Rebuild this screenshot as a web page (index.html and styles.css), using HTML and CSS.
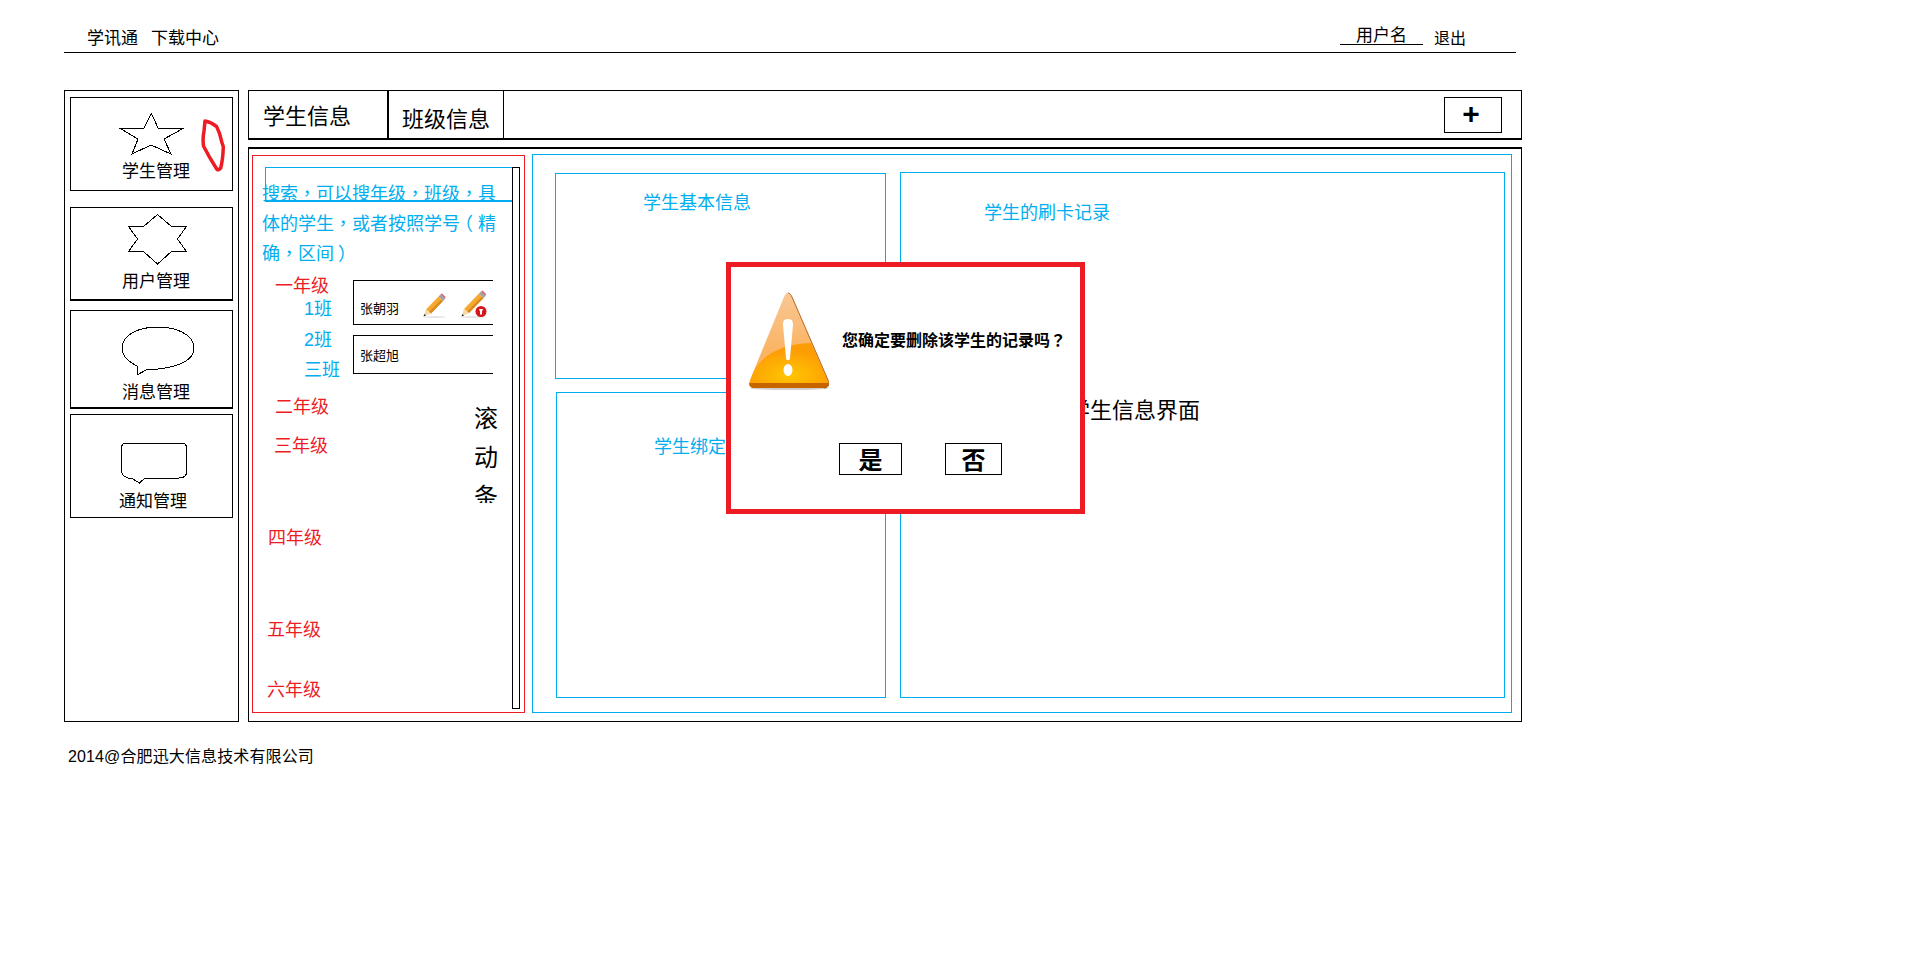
FILE: index.html
```html
<!DOCTYPE html>
<html lang="zh-CN">

<head>
  <meta charset="UTF-8" />
  <meta name="viewport" content="width=device-width, initial-scale=1.0" />
  <title>学讯通</title>
  <link rel="stylesheet" href="styles.css">
</head>

<body>
  <header class="top">
    <nav class="top-nav">
      <a>学讯通</a>
      <a>下载中心</a>
    </nav>
    <div class="top-user">
      <span class="user-name">用户名</span>
      <a>退出</a>
    </div>
  </header>

  <div class="layout">
    <aside class="sidebar">
      <div class="card card-student">
        <svg class="shape" width="66" height="43" viewBox="0 0 66 43">
          <polygon points="32.5,0.5 39,15 65,15 45,26 52,41 32,32 13,41 19,26 0.5,15 25,15" />
        </svg>
        <span class="card-label">学生管理</span>
        <svg class="scribble" width="26" height="54" viewBox="0 0 26 54">
          <path d="M4 2 Q10 3 15.7 7.7 Q19 14 20.7 22.7 L22.3 27.7 Q22 40 19.7 49 Q17 52 15.7 50 Q8 38 2.5 27 Q1.5 20 3 12 Z" />
        </svg>
      </div>
      <div class="card card-user">
        <svg class="shape" width="60" height="53" viewBox="0 0 60 53">
          <polygon points="29.5,0.5 43.5,12.5 58.5,12.5 49.5,25 58.5,37.5 43.5,37.5 29.5,50 15.5,37.5 0.5,37.5 9.5,25 0.5,12.5 15.5,12.5" />
        </svg>
        <span class="card-label">用户管理</span>
      </div>
      <div class="card card-message">
        <svg class="shape" width="75" height="51" viewBox="0 0 75 51">
          <path d="M16 40 L16 49 L25 44 C47 43 73 38 73 22 C73 8 54 1 37 1 C19 1 1 8 1 22 C1 30 8 36 16 40 Z" />
        </svg>
        <span class="card-label">消息管理</span>
      </div>
      <div class="card card-notice">
        <svg class="shape" width="67" height="42" viewBox="0 0 67 42">
          <path d="M6 1 H60 Q65.5 1 65.5 6 V30 Q65.5 36 58 36 H24 L18.5 41 L10 36 H7 Q0.5 34 0.5 28 V6 Q0.5 1 6 1 Z" />
        </svg>
        <span class="card-label">通知管理</span>
      </div>
    </aside>

    <div class="content">
      <div class="tabs">
        <div class="tab tab-student">学生信息</div>
        <div class="tab tab-class">班级信息</div>
        <button class="tab-add">+</button>
      </div>

      <main class="main">
        <section class="tree-panel">
          <div class="search-box"></div>
          <div class="fake-scroll"></div>
          <p class="search-text">搜索<span class="punct" lang="zh-TW">，</span>可以搜年级<span class="punct" lang="zh-TW">，</span>班级<span class="punct" lang="zh-TW">，</span>具体的学生<span class="punct" lang="zh-TW">，</span>或者按照学号<span class="paren-open">（</span>精确<span class="punct" lang="zh-TW">，</span>区间<span class="paren-close">）</span></p>
          <div class="tree">
            <ul class="grades">
              <li class="grade g1">一年级</li>
              <li class="klass k1">1班</li>
              <li class="klass k2">2班</li>
              <li class="klass k3">三班</li>
              <li class="grade g2">二年级</li>
              <li class="grade g3">三年级</li>
              <li class="grade g4">四年级</li>
              <li class="grade g5">五年级</li>
              <li class="grade g6">六年级</li>
            </ul>
            <div class="students">
              <div class="student student-first">
                <span class="student-name">张朝羽</span>
                <svg class="pencil" width="23" height="25" viewBox="0 0 23 25">
                  <ellipse class="pencil-shadow" cx="12" cy="24" rx="11" ry="1" />
                  <polygon fill="#f6a92f" points="3,16.5 15.5,3.5 20,8 8,20.5" />
                  <polygon fill="#d98a1f" points="6,19 18.5,6.5 20,8 8,20.5" />
                  <polygon fill="#f8d9a6" points="0.5,23.5 3,16.5 8,20.5" />
                  <polygon fill="#222222" points="0.5,23.5 1.4,21 3,22.4" />
                  <polygon fill="#9aa3a8" points="15.5,3.5 17.5,1.5 22,6 20,8" />
                  <polygon fill="#d8616c" points="17.5,1.5 19,0.5 22.5,4 22,6" />
                </svg>
                <svg class="pencil pencil-del" width="26" height="28" viewBox="0 0 26 28">
                  <ellipse class="pencil-shadow" cx="12" cy="27" rx="12" ry="1" />
                  <polygon fill="#f6a92f" points="3,19 18,3.5 22.5,8 8,23" />
                  <polygon fill="#d98a1f" points="6,21.5 21,6.5 22.5,8 8,23" />
                  <polygon fill="#f8d9a6" points="0.5,26.5 3,19 8,23" />
                  <polygon fill="#222222" points="0.5,26.5 1.4,24 3,25.4" />
                  <polygon fill="#9aa3a8" points="18,3.5 20,1.5 24.5,6 22.5,8" />
                  <polygon fill="#d8616c" points="20,1.5 21.5,0.5 25,4 24.5,6" />
                  <circle fill="#d7141a" cx="20" cy="21.5" r="5.5" />
                  <path d="M18 19 H22 L21 21.5 V24.5 H19 V21.5 Z" fill="#ffffff" />
                </svg>
              </div>
              <div class="student student-second">
                <span class="student-name">张超旭</span>
              </div>
              <div class="scroll-label">滚动条</div>
            </div>
          </div>
        </section>

        <section class="info-panel">
          <div class="info-left">
            <div class="box box-basic"><span class="box-title">学生基本信息</span></div>
            <div class="box box-bind"><span class="box-title">学生绑定的卡</span></div>
          </div>
          <div class="box box-record">
            <div class="box-title">学生的刷卡记录</div>
            <div class="page-title">学生信息界面</div>
          </div>
        </section>
      </main>
    </div>
  </div>

  <footer class="footer">2014@合肥迅大信息技术有限公司</footer>

  <div class="dialog">
    <div class="dialog-body">
      <svg class="warn" width="80" height="98" viewBox="0 0 80 98">
        <defs>
          <linearGradient id="warnTop" x1="0" y1="0" x2="0" y2="1">
            <stop offset="0" stop-color="#f9c797" />
            <stop offset="0.6" stop-color="#fbb463" />
          </linearGradient>
          <radialGradient id="warnLow" cx="0.49" cy="0.72" r="0.55">
            <stop offset="0" stop-color="#ffc600" />
            <stop offset="1" stop-color="#fd9d05" />
          </radialGradient>
          <clipPath id="warnClip">
            <path d="M39 1 C41 1 42 3 43 5 L79 88 C81 93 79 96 75 96 H5 C1 96 -1 93 1 88 L35 5 C36 3 37 1 39 1 Z" />
          </clipPath>
        </defs>
        <ellipse cx="40" cy="96.5" rx="39" ry="1.5" fill="#cfcfcf" />
        <g clip-path="url(#warnClip)">
          <rect width="80" height="98" fill="url(#warnTop)" />
          <path d="M0 96 C2 70 25 52 62 51 L82 96 Z" fill="url(#warnLow)" />
          <rect y="91" width="80" height="6" fill="#c76400" />
        </g>
        <path d="M39 1 C41 1 42 3 43 5 L79 88 C81 93 79 96 75 96" fill="none" stroke="#b9661c" stroke-width="1" />
        <path d="M39 27 C43 27 44 29 44 33 L41 66 C41 69 37 69 37 66 L34 33 C34 29 35 27 39 27 Z" fill="#ffffff" />
        <ellipse cx="39" cy="78" rx="4.5" ry="6" fill="#ffffff" />
      </svg>
      <p class="dialog-text">您确定要删除该学生的记录吗<span class="punct" lang="zh-TW">？</span></p>
    </div>
    <div class="dialog-actions">
      <button class="dialog-btn btn-yes">是</button>
      <button class="dialog-btn btn-no">否</button>
    </div>
  </div>
</body>

</html>
```

FILE: styles.css
```css
* {
  box-sizing: border-box;
}

body {
  margin: 0;
  background-color: #ffffff;
  color: #000000;
  font-family: "Liberation Sans", "Noto Sans CJK SC", sans-serif;
  font-size: 17px;
  line-height: 20px;
}

p,
ul {
  margin: 0;
  padding: 0;
}

ul {
  list-style: none;
}

/* centered full-width punctuation */
.punct {
  font-family: "Noto Sans CJK TC", sans-serif;
  line-height: 1;
}

.paren-open,
.paren-close {
  display: inline-block;
  line-height: 1;
}

.paren-open {
  transform: translateX(-5px);
}

.paren-close {
  transform: translateX(4px);
}

/* top bar */
.top {
  display: flex;
  justify-content: space-between;
  align-items: flex-end;
  width: 1452px;
  height: 53px;
  margin-left: 64px;
  padding: 0 50px 3px 23px;
  border-bottom: 1px solid #000;
}

.top-nav {
  display: flex;
  gap: 13px;
}

.top-user {
  display: flex;
  align-items: flex-end;
  gap: 11px;
  font-size: 16px;
}

.user-name {
  width: 83px;
  height: 21px;
  margin-bottom: 4px;
  border-bottom: 1px solid #000;
  font-size: 17px;
  line-height: 24px;
  text-align: center;
}

/* page body */
.layout {
  display: flex;
  gap: 9px;
  width: 1458px;
  height: 632px;
  margin: 37px 0 0 64px;
}

.sidebar {
  width: 175px;
  padding: 6px 5px;
  border: 1px solid #000;
}

.card {
  position: relative;
  display: flex;
  flex-direction: column;
  align-items: flex-start;
  border: 1px solid #000;
}

.shape {
  display: block;
  fill: none;
  stroke: #000;
  stroke-width: 1;
  shape-rendering: crispEdges;
}

.card-student {
  height: 94px;
  padding-top: 15px;
}

.card-student .shape {
  margin-left: 48px;
}

.card-student .card-label {
  margin: 6px 0 0 51px;
}

.card-user {
  height: 94px;
  margin-top: 16px;
  padding-top: 6px;
  border-bottom-width: 2px;
}

.card-user .shape {
  margin-left: 57px;
}

.card-user .card-label {
  margin: 5px 0 0 51px;
}

.card-message {
  height: 99px;
  margin-top: 9px;
  padding-top: 15px;
  border-bottom-width: 2px;
}

.card-message .shape {
  margin-left: 50px;
}

.card-message .card-label {
  margin: 6px 0 0 51px;
}

.card-notice {
  height: 104px;
  margin-top: 5px;
  padding-top: 27px;
}

.card-notice .shape {
  margin-left: 50px;
}

.card-notice .card-label {
  margin: 8px 0 0 48px;
}

.scribble {
  position: absolute;
  top: 21px;
  left: 130px;
  fill: none;
  stroke: #ed1c24;
  stroke-width: 3.5;
  stroke-linejoin: round;
}

.content {
  display: flex;
  flex-direction: column;
  gap: 7px;
  width: 1274px;
}

.tabs {
  display: flex;
  height: 50px;
  border: 1px solid #000;
  border-bottom-width: 2px;
  font-size: 22px;
}

.tab {
  height: 100%;
}

.tab-student {
  width: 140px;
  padding: 6px 0 0 14px;
  line-height: 40px;
  border-right: 2px solid #000;
}

.tab-class {
  width: 115px;
  padding: 9px 0 0 13px;
  line-height: 40px;
  border-right: 1px solid #000;
}

.tab-add {
  width: 58px;
  height: 36px;
  margin: 6px 19px 0 auto;
  padding: 0 4px 3px 0;
  background: #fff;
  border: 1px solid #000;
  font-family: "Liberation Sans", sans-serif;
  font-size: 30px;
  font-weight: bold;
  line-height: 30px;
}

.main {
  display: flex;
  align-items: flex-start;
  gap: 7px;
  height: 575px;
  padding: 5px 0 0 3px;
  border: 1px solid #000;
  border-top-width: 2px;
}

/* left tree */
.tree-panel {
  position: relative;
  width: 273px;
  height: 558px;
  margin-top: 1px;
  padding: 23px 0 0 9px;
  border: 1px solid #ed1c24;
  font-size: 18px;
}

.search-box {
  position: absolute;
  top: 11px;
  left: 12px;
  width: 248px;
  height: 35px;
  border: solid #00aeef;
  border-width: 1px 0 2px 1px;
}

.fake-scroll {
  position: absolute;
  top: 11px;
  right: 4px;
  width: 8px;
  height: 542px;
  border: 1px solid #000;
}

.search-text {
  position: relative;
  width: 238px;
  color: #00aeef;
  line-height: 30px;
}

.tree {
  display: flex;
  margin-left: -9px;
}

.grades {
  width: 100px;
}

.grade {
  color: #ed1c24;
}

.klass {
  margin-left: 51px;
  color: #00aeef;
}

.g1 {
  margin: 7px 0 0 22px;
}

.k1 {
  margin-top: 3px;
}

.k2 {
  margin-top: 11px;
}

.k3 {
  margin-top: 10px;
}

.g2 {
  margin: 17px 0 0 22px;
}

.g3 {
  margin: 19px 0 0 21px;
}

.g4 {
  margin: 72px 0 0 15px;
}

.g5 {
  margin: 72px 0 0 14px;
}

.g6 {
  margin: 40px 0 0 14px;
}

.students {
  margin-top: 11px;
}

.student {
  display: flex;
  align-items: flex-start;
  width: 140px;
  padding-left: 6px;
  border: solid #000;
  border-width: 1px 0 1px 1px;
  font-size: 13px;
  line-height: 16px;
}

.student-first {
  height: 45px;
}

.student-first .student-name {
  margin-top: 20px;
}

.student-second {
  height: 39px;
  margin-top: 10px;
}

.student-second .student-name {
  margin-top: 12px;
}

.pencil {
  margin: 12px 0 0 24px;
}

.pencil-del {
  margin: 9px 0 0 15px;
}

.pencil-shadow {
  fill: #e6e6e6;
}

.scroll-label {
  width: 24px;
  height: 104px;
  margin: 25px 0 0 121px;
  overflow: hidden;
  font-size: 24px;
  line-height: 39px;
}

/* right panel */
.info-panel {
  display: flex;
  align-items: flex-start;
  gap: 14px;
  width: 980px;
  height: 559px;
  padding: 17px 0 0 22px;
  border: 1px solid #00aeef;
  font-size: 18px;
  color: #00aeef;
}

.info-left {
  display: flex;
  flex-direction: column;
  gap: 13px;
  width: 331px;
}

.box {
  border: 1px solid #00aeef;
}

.box-basic {
  height: 206px;
  margin-top: 1px;
  padding: 19px 0 0 87px;
}

.box-bind {
  height: 306px;
  margin-left: 1px;
  padding: 44px 0 0 97px;
}

.box-record {
  width: 605px;
  height: 526px;
  padding: 30px 0 0 83px;
}

.page-title {
  margin: 173px 0 0 84px;
  color: #000;
  font-size: 22px;
  line-height: 30px;
}

.footer {
  margin: 25px 0 0 68px;
  font-size: 16px;
  letter-spacing: 0.12px;
}

/* delete dialog */
.dialog {
  position: absolute;
  top: 262px;
  left: 726px;
  width: 359px;
  height: 252px;
  background: #fff;
  border: 5px solid #ed1c24;
}

.dialog-body {
  display: flex;
  align-items: flex-start;
  padding: 25px 0 0 18px;
}

.warn {
  display: block;
  flex-shrink: 0;
}

.dialog-text {
  margin: 39px 0 0 13px;
  font-size: 16px;
  font-weight: bold;
  white-space: nowrap;
}

.dialog-actions {
  display: flex;
  gap: 43px;
  margin: 53px 0 0 108px;
}

.dialog-btn {
  height: 32px;
  padding: 0;
  background: #fff;
  border: 1px solid #000;
  font-family: "Noto Sans CJK SC", sans-serif;
  font-size: 24px;
  font-weight: bold;
  line-height: 28px;
}

.btn-yes {
  width: 63px;
}

.btn-no {
  width: 57px;
}
```
